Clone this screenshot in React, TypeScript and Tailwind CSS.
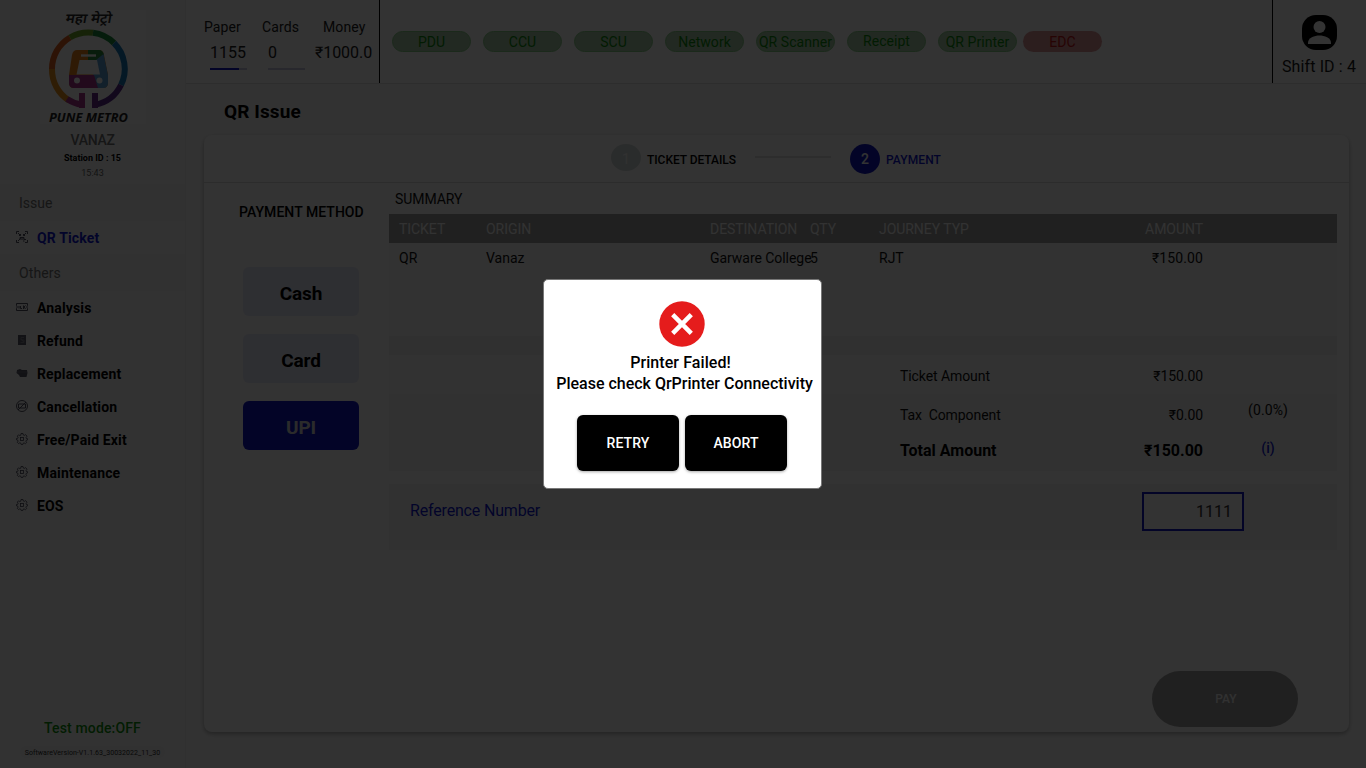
import React from 'react';

const PILLS = ['PDU', 'CCU', 'SCU', 'Network', 'QR Scanner', 'Receipt', 'QR Printer'];

function Logo() {
  return (
    <svg width="106" height="114" viewBox="40 10 106 114" className="shrink-0 overflow-visible">
      <rect x="40" y="10" width="106" height="114" fill="#fdfdfd" />
      <text x="88" y="23.500" textAnchor="middle" textLength="46" lengthAdjust="spacingAndGlyphs" fontSize="13.500" fontWeight="600" fontStyle="italic" fontFamily="'Noto Sans', 'Noto Sans Devanagari', sans-serif" fill="#2a2a2a" transform="translate(4.200 0) skewX(-10)">महा मेट्रो</text>
      <g fill="none" strokeWidth="6">
        <path d="M69 100.5A36.5 36.5 0 0 1 52 69" stroke="#e8921c" />
        <path d="M52 69A36.5 36.5 0 0 1 70 37.500" stroke="#e0601f" />
        <path d="M70 37.500A36.500 36.500 0 0 1 93 32.800" stroke="#6fa82c" />
        <path d="M93 32.800A36.500 36.500 0 0 1 114 43" stroke="#1c8a3e" />
        <path d="M114 43A36.500 36.500 0 0 1 121 85" stroke="#1579b8" />
        <path d="M121 85A36.500 36.500 0 0 1 95 104.800" stroke="#5a2a8c" />
        <path d="M82 104.800A36.500 36.500 0 0 1 67 99" stroke="#a8328c" />
      </g>
      <path d="M79 93h6v15h-6z" fill="#a8328c" />
      <path d="M92 93h6v15h-6z" fill="#6a2a8c" />
      <path d="M77 50h22q4 0 5 5l4 20v8q0 5-5 5H74q-5 0-5-5v-8l3-20q1-5 5-5z" fill="#e8821c" />
      <path d="M88 50h11q4 0 5 5l-4 5H88z" fill="#2c8a3e" />
      <path d="M96 60l7.500-6 4.500 21v8q0 5-5 5h-8l-2-13z" fill="#5aa0d8" />
      <path d="M69 75h25l4 13H74q-5 0-5-5z" fill="#a8328c" />
      <path d="M79.500 60h17.500l3 14.500H76.500z" fill="#fdfdfd" />
      <path d="M81 54.300h15v2.400H81z" fill="#fdfdfd" />
      <circle cx="77" cy="80.500" r="3" fill="#fdfdfd" />
      <circle cx="99.500" cy="80.500" r="3" fill="#fdfdfd" />
      <text x="88.500" y="122" textAnchor="middle" textLength="79" lengthAdjust="spacingAndGlyphs" fontSize="11.500" fontWeight="700" fontStyle="italic" fontFamily="'Open Sans', sans-serif" fill="#222">PUNE METRO</text>
    </svg>
  );
}

function MenuIcon({ kind }: { kind: string }) {
  const line = { fill: 'none', stroke: '#404050', strokeWidth: 0.9 };
  return (
    <svg width="12" height="12" viewBox="0 0 12 12" className="mb-[3px] shrink-0">
      {kind === 'qr' && (
        <g {...line}>
          <path d="M.5 3V.5H3M9 .5h2.500V3M.5 9v2.500H3M9 11.500h2.500V9" />
          <path d="M2 2l2.500 2.500M10 2L7.500 4.500M2 10l2.500-2.500M4.500 3v1.500H3M7.500 3v1.500H9M4 6.500h4v1.500H4zM8 8.500h2M7 10h1.500" />
        </g>
      )}
      {kind === 'ticket' && (
        <g {...line}>
          <path d="M.5 2.500h11v2q-1.500 1.500 0 3v2H.5v-2q1.500-1.500 0-3z" />
          <path d="M3 5v2.500M4.500 5v2.500h1.500M7.500 4.500v3.500M9.500 4.500l-1.500 1.500 1.500 2" />
        </g>
      )}
      {kind === 'refund' && (
        <g>
          <path d="M2 1h8v10H2z" fill="#5a5a6a" />
          <path d="M8 3.500H5v2.500h3v2.500H4.500M5.500 5l2 3" fill="none" stroke="#8a8a96" strokeWidth=".8" />
        </g>
      )}
      {kind === 'replace' && (
        <g>
          <path d="M1 3l3-1 2 1h5l.5 3-1 4H4L3 8 .500 6z" fill="#565666" />
          <path d="M1 5h10" stroke="#77778a" strokeWidth=".6" />
        </g>
      )}
      {kind === 'cancel' && (
        <g {...line}>
          <circle cx="6" cy="6" r="5.500" />
          <path d="M2.500 4h7v4h-7zM2 10l8-8" />
        </g>
      )}
      {kind === 'gear' && (
        <g {...line} strokeWidth=".8">
          <path d="M5 .5h2l.3 1.500 1 .4 1.300-.8L11 3.200 10.100 4.500l.3 1 1.200.2v1.200l-1.300.4-.4 1 .8 1.200-1.300 1.200-1.300-.8-1 .4L6.800 11.500H5.200l-.4-1.300-1-.4-1.200.8L1.300 9.300l.8-1.200-.4-1L.5 6.800V5.500l1.200-.2.400-1-.8-1.200 1.300-1.300 1.200.8 1-.4z" />
          <rect x="4.500" y="4.500" width="3" height="3" />
        </g>
      )}
    </svg>
  );
}

function MenuItem({ icon, label, active = false }: { icon: string; label: string; active?: boolean }) {
  return (
    <div className={`flex h-[33px] items-center gap-[9px] pt-0.5 pl-4 text-[14px] font-bold tracking-[0.15px] ${active ? 'text-[#1018d0]' : 'text-black'}`}>
      <MenuIcon kind={icon} />
      {label}
    </div>
  );
}

function Sidebar() {
  return (
    <aside className="flex w-[186px] shrink-0 flex-col border-r border-[#f0f0f0] bg-[#fbfbfb]">
      <div className="flex h-[184px] flex-col items-center pt-[10px]">
        <Logo />
        <div className="mt-1.5 h-5 text-[14px] leading-5 font-medium tracking-[-0.3px] text-[#707070]">VANAZ</div>
        <div className="h-4 text-[9px] leading-4 font-bold">Station ID : 15</div>
        <div className="h-3.5 text-[9px] leading-[14px] text-[#606060]">15:43</div>
      </div>
      <div className="flex h-[37px] items-center bg-[#f2f2f2] pt-0.5 pl-[19px] text-[14px] text-[#707070]">Issue</div>
      <MenuItem icon="qr" label="QR Ticket" active />
      <div className="flex h-[37px] items-center bg-[#f2f2f2] pt-0.5 pl-[19px] text-[14px] tracking-[0.1px] text-[#707070]">Others</div>
      <MenuItem icon="ticket" label="Analysis" />
      <MenuItem icon="refund" label="Refund" />
      <MenuItem icon="replace" label="Replacement" />
      <MenuItem icon="cancel" label="Cancellation" />
      <MenuItem icon="gear" label="Free/Paid Exit" />
      <MenuItem icon="gear" label="Maintenance" />
      <MenuItem icon="gear" label="EOS" />
      <div className="mt-auto flex flex-col items-center pb-2.5">
        <div className="h-5 text-[14px] leading-5 font-medium tracking-[0.15px] text-[#0c900c]">Test mode:OFF</div>
        <div className="mt-2 flex h-3 w-[145px] items-center justify-center rounded-full bg-[#f2f2f2] pt-0.5 text-[7px] tracking-[0.04px] whitespace-nowrap text-[#303030]">
          SoftwareVersion-V1.1.63_30032022_11_30
        </div>
      </div>
    </aside>
  );
}

function Header() {
  return (
    <header className="flex h-[84px] shrink-0 border-b border-[#e2e2e2] bg-[#fdfdfd]">
      <div className="flex w-[194px] flex-col border-r border-black pt-[17px] text-[#202020]">
        <div className="flex h-5 text-[14px] leading-5 tracking-[0.1px]">
          <span className="ml-[18px] w-[58px]">Paper</span>
          <span className="w-[61px]">Cards</span>
          <span>Money</span>
        </div>
        <div className="mt-1.5 flex h-5 text-[16px] leading-5">
          <span className="ml-6 w-[58px]">1155</span>
          <span className="w-[47px]">0</span>
          <span className="tracking-[-0.05px]">₹1000.0</span>
        </div>
        <div className="mt-[5px] flex h-0.5">
          <span className="ml-6 flex w-[37px] bg-[#c8c8e0]"><span className="w-[29px] bg-[#1018c0]" /></span>
          <span className="ml-[21px] w-[37px] bg-[#c8c8e0]" />
        </div>
      </div>
      <div className="flex flex-1 items-center pl-3">
        {PILLS.map((p) => (
          <div key={p} className={`mr-3 flex h-[21px] w-[79px] items-center justify-center rounded-full border border-[#88cc88] bg-[#a8cca8] text-[14px] leading-5 tracking-[0.05px] whitespace-nowrap text-[#0c8a0c] ${p === 'Receipt' ? 'pb-px' : 'pt-px'}`}>{p}</div>
        ))}
        <div className="-ml-1.5 flex h-[21px] w-[79px] items-center justify-center rounded-full bg-[#dc9496] pt-px text-[14px] leading-5 text-[#c01418]">EDC</div>
      </div>
      <div className="flex w-[94px] flex-col items-center border-l border-black pt-[15px]">
        <svg width="35" height="35" viewBox="0 0 35 35">
          <rect width="35" height="35" rx="14" fill="#000" />
          <circle cx="17.500" cy="12" r="6" fill="#fdfdfd" />
          <path d="M6 29v-1.500C6 23 12.500 20.500 17.500 20.500S29 23 29 27.500V29z" fill="#fdfdfd" />
        </svg>
        <div className="mt-[7px] h-5 pr-px text-[16px] leading-5 tracking-[0.12px] whitespace-nowrap text-[#181818]">Shift ID : 4</div>
      </div>
    </header>
  );
}

function Steps() {
  return (
    <div className="flex h-12 shrink-0 items-start border-b border-[#dcdcdc] pt-[9px] pl-[407px]">
      <span className="flex h-[27px] w-[30px] items-center justify-center rounded-[50%] bg-[#d3dada] pt-1 text-[14px] text-[#f5f5f5]">1</span>
      <span className="mt-1.5 ml-1.5 w-[108px] text-[12px] leading-5 font-medium tracking-[-0.05px]">TICKET DETAILS</span>
      <span className="mt-3 h-0.5 w-[76px] bg-[#e2e2e2]" />
      <span className="ml-[19px] flex size-[30px] items-center justify-center rounded-full bg-[#1018c0] text-[14px] font-medium text-white">2</span>
      <span className="mt-1.5 ml-1.5 text-[12px] leading-5 font-medium tracking-[0.1px] text-[#1018d0]">PAYMENT</span>
    </div>
  );
}

function SummaryRow({ label, value, extra, className }: { label: string; value: string; extra?: React.ReactNode; className: string }) {
  return (
    <div className={`flex shrink-0 items-center pl-[511px] ${className}`}>
      <span className="w-[203px] whitespace-pre">{label}</span>
      <span className="w-[100px] text-right">{value}</span>
      <span className="ml-[25px] w-20 text-center text-[14px]">{extra}</span>
    </div>
  );
}

function Methods() {
  return (
    <div className="flex w-[185px] shrink-0 flex-col pl-[35px] pt-[19px]">
      <h2 className="h-5 text-[14px] leading-5 font-medium tracking-[0.05px] whitespace-nowrap">PAYMENT METHOD</h2>
      <div className="mt-[45px] ml-1 flex w-[116px] flex-col gap-[18px] text-[19px] font-bold tracking-[-0.1px]">
        <button className="h-[49px] rounded-md bg-[#e6eaf8] pt-[5px]">Cash</button>
        <button className="h-[49px] rounded-md bg-[#e6eaf8] pt-[5px]">Card</button>
        <button className="h-[49px] rounded-md bg-[#1018c0] pt-[5px] text-[#d8d8d8]">UPI</button>
      </div>
    </div>
  );
}

function Summary() {
  const cols = 'grid h-[29px] shrink-0 grid-cols-[87px_224px_100px_69px_224px_100px] items-center pl-[10px] pt-0.5 text-[14px] whitespace-nowrap';
  return (
    <div className="flex w-[948px] flex-col text-[14px] text-[#111]">
      <div className="h-[31px] pt-1.5 pl-1.5 leading-5 tracking-[-0.05px]">SUMMARY</div>
      <div className={`${cols} bg-[#a0a0a0] tracking-[-0.05px] text-[#f8f8f8]`}>
        <span>TICKET</span><span>ORIGIN</span><span>DESTINATION</span><span>QTY</span><span>JOURNEY TYP</span><span className="text-right">AMOUNT</span>
      </div>
      <div className={`${cols} bg-[#f8f8f8]`}>
        <span>QR</span><span>Vanaz</span><span className="tracking-[-0.05px]">Garware College</span><span>5</span><span>RJT</span><span className="text-right tracking-[0.1px]">₹150.00</span>
      </div>
      <div className="h-16 shrink-0 bg-[#fbfbfb]" />
      <div className="h-[19px] shrink-0 bg-[#f0f0f0]" />
      <SummaryRow label="Ticket Amount" value="₹150.00" className="h-[39px] bg-[#f9f9f9] pt-1 tracking-[-0.08px]" />
      <SummaryRow label="Tax  Component" value="₹0.00" extra={<span className="relative -top-[5px] tracking-[0.1px]">(0.0%)</span>} className="h-[39px] bg-[#f3f3f3] pt-1 tracking-[-0.08px]" />
      <SummaryRow label="Total Amount" value="₹150.00" extra={<span className="relative -top-[3px] font-medium text-[#1018d0]">(i)</span>} className="h-[38px] bg-[#f6f6f6] pb-0.5 text-[16px] font-bold text-black" />
      <div className="mt-[13px] flex h-[66px] shrink-0 bg-[#f5f5f5] pl-[21px] text-[16px]">
        <label className="mt-[17px] w-[732px] leading-5 tracking-[-0.17px] text-[#1018d0]">Reference Number</label>
        <div className="mt-2 flex h-[39px] w-[102px] items-center justify-end border-2 border-[#1018c0] bg-[#fcfcfc] pr-2.5 text-[#303030]">1111</div>
      </div>
      <button className="mt-[121px] ml-[763px] h-14 w-[146px] shrink-0 rounded-full bg-[#a0a0a0] pl-0.5 text-[12px] font-medium text-[#f4f4f4]">PAY</button>
    </div>
  );
}

function Dialog() {
  return (
    <div className="fixed inset-0 flex justify-center bg-black/80 pr-px">
      <div className="mt-[279px] flex h-[210px] w-[279px] flex-col items-center rounded-[5px] border border-[#777] bg-white text-[16px] font-medium text-black">
        <svg width="46" height="46" viewBox="0 0 46 46" className="mt-[21px] mr-0.5 shrink-0">
          <circle cx="23" cy="23" r="22.700" fill="#e51c1c" />
          <path d="M13.700 13.700l18.600 18.600M32.300 13.700l-18.600 18.600" stroke="#fff" strokeWidth="4.500" />
        </svg>
        <div className="mt-[5px] pr-1 leading-[21px] tracking-[0.08px]">Printer Failed!</div>
        <div className="ml-1 leading-[21px] whitespace-nowrap">Please check QrPrinter Connectivity</div>
        <div className="mt-[21px] flex gap-1.5 pr-px text-[14px] tracking-[0.1px] text-white">
          <button className="h-14 w-[102px] rounded-md bg-black pt-px font-medium shadow-[0_1px_3px_rgba(0,0,0,0.35)]">RETRY</button>
          <button className="h-14 w-[102px] rounded-md bg-black pt-px font-medium shadow-[0_1px_3px_rgba(0,0,0,0.35)]">ABORT</button>
        </div>
      </div>
    </div>
  );
}

export default function App() {
  return (
    <div className="flex h-[768px] w-[1366px] overflow-hidden bg-[#fafafa] font-[Roboto,sans-serif] text-black">
      <Sidebar />
      <main className="flex flex-1 flex-col">
        <Header />
        <h1 className="h-[51px] pt-[17px] pl-[38px] text-[19px] leading-[22px] font-bold tracking-[0.1px]">QR Issue</h1>
        <section className="ml-[18px] flex h-[597px] w-[1145px] flex-col rounded-lg bg-[#fdfdfd] shadow-[0_2px_4px_rgba(0,0,0,0.3)]">
          <Steps />
          <div className="flex flex-1">
            <Methods />
            <Summary />
          </div>
        </section>
      </main>
      <Dialog />
    </div>
  );
}
